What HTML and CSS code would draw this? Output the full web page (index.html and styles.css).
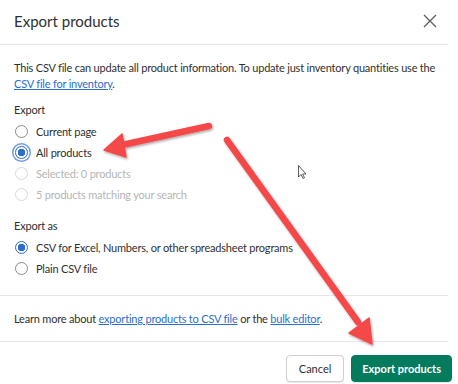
FILE: index.html
```html
<!DOCTYPE html>
<html lang="en">
<head>
    <meta charset="UTF-8">
    <meta name="viewport" content="width=device-width, initial-scale=1.0">
    <title>Export products</title>
    <link rel="stylesheet" href="styles.css">
</head>
<body>
    <div class="modal">
        <div class="modal-header">
            <h2>Export products</h2>
            <button class="close" aria-label="Close">
                <svg width="14" height="14" viewBox="0 0 14 14"><path d="M1 1 L13 13 M13 1 L1 13" stroke="#5c5c5c" stroke-width="1.3" fill="none"/></svg>
            </button>
        </div>

        <div class="modal-body">
            <p class="intro">This CSV file can update all product information. To update just inventory quantities use the <a href="#">CSV file for inventory</a>.</p>

            <div class="group">
                <div class="group-label">Export</div>
                <label class="radio"><input type="radio" name="scope"><span class="dot"></span>Current page</label>
                <label class="radio"><input type="radio" name="scope" checked><span class="dot focus"></span>All products</label>
                <label class="radio disabled"><input type="radio" name="scope" disabled><span class="dot"></span>Selected: 0 products</label>
                <label class="radio disabled"><input type="radio" name="scope" disabled><span class="dot"></span>5 products matching your search</label>
            </div>

            <div class="group">
                <div class="group-label">Export as</div>
                <label class="radio"><input type="radio" name="format" checked><span class="dot"></span>CSV for Excel, Numbers, or other spreadsheet programs</label>
                <label class="radio"><input type="radio" name="format"><span class="dot"></span>Plain CSV file</label>
            </div>
        </div>

        <div class="modal-section">
            <p>Learn more about <a href="#">exporting products to CSV file</a> or the <a href="#">bulk editor</a>.</p>
        </div>

        <div class="modal-footer">
            <button class="btn">Cancel</button>
            <button class="btn btn-primary">Export products</button>
        </div>

        <!-- annotation overlay -->
        <svg class="annotations" width="458" height="384" viewBox="0 0 458 384">
            <defs>
                <filter id="shadow" x="-20%" y="-20%" width="140%" height="140%">
                    <feDropShadow dx="1" dy="1.5" stdDeviation="1" flood-color="#000" flood-opacity="0.35"/>
                </filter>
            </defs>
            <g filter="url(#shadow)" fill="#f54949" stroke="#f54949">
                <line x1="209" y1="126" x2="122" y2="145" stroke-width="6.5" stroke-linecap="round"/>
                <polygon points="104,150 122,134 126,157" stroke-width="1.5" stroke-linejoin="round"/>
                <line x1="227" y1="140" x2="358" y2="322" stroke-width="6.5" stroke-linecap="round"/>
                <polygon points="372,344 349,333 369,318" stroke-width="1.5" stroke-linejoin="round"/>
            </g>
            <path d="M298.5 165.5 L298.5 177 L301 174.5 L303 178.5 L304.5 177.8 L302.6 174 L306 174 Z" fill="#fff" stroke="#333" stroke-width="0.8" stroke-linejoin="round"/>
        </svg>
    </div>
</body>
</html>
```

FILE: styles.css
```css
* {
    margin: 0;
    padding: 0;
    box-sizing: border-box;
}

body {
    font-family: Lato, "Open Sans", sans-serif;
    font-size: 11px;
    letter-spacing: -0.2px;
    color: #303030;
    background: white;
    width: 458px;
    height: 384px;
    overflow: hidden;
}

.modal {
    position: relative;
    width: 458px;
    height: 384px;
    background: white;
}

.modal-header {
    height: 45px;
    display: flex;
    align-items: center;
    justify-content: space-between;
    padding: 0 12px 2px 14px;
    border-bottom: 1px solid #e6e6e6;
    margin-right: 10px;
}

.modal-header h2 {
    font-size: 15px;
    font-weight: 400;
    letter-spacing: 0;
    color: #303030;
}

.close {
    border: none;
    background: none;
    width: 16px;
    height: 16px;
    display: flex;
    align-items: center;
    justify-content: center;
    margin-right: -2px;
}

a {
    color: #2c6ecb;
    text-decoration: underline;
}

.modal-body {
    padding: 15px 0 16px 14px;
    border-bottom: 1px solid #e6e6e6;
    margin-right: 10px;
}

.intro {
    line-height: 16px;
    margin-bottom: 10px;
}

.group + .group {
    margin-top: 13px;
}

.group-label {
    line-height: 16px;
    margin-bottom: 3px;
}

.radio {
    display: flex;
    align-items: center;
    height: 21px;
    gap: 8px;
    padding-left: 1px;
}

.radio input {
    display: none;
}

.dot {
    width: 13px;
    height: 13px;
    border-radius: 50%;
    border: 1.5px solid #8a8a8a;
    background: white;
    flex-shrink: 0;
}

.radio input:checked + .dot {
    border: 1px solid #2c6ecb;
    background: radial-gradient(circle, #2c6ecb 0 3.5px, white 4px);
}

.dot.focus {
    box-shadow: 0 0 0 1.5px white, 0 0 0 3px #6b9be0;
}

.radio.disabled {
    color: #b5b5b5;
}

.radio.disabled .dot {
    border-color: #d6d6d6;
}

.modal-section {
    padding: 0 14px;
    height: 46px;
    display: flex;
    align-items: center;
    border-bottom: 1px solid #e6e6e6;
    margin-right: 10px;
}

.modal-footer {
    display: flex;
    justify-content: flex-end;
    gap: 7px;
    padding: 13px 6px 0 0;
}

.btn {
    font-family: Lato, "Open Sans", sans-serif;
    font-size: 11px;
    height: 27px;
    padding: 0 12px;
    border-radius: 4px;
    border: 1px solid #cfcfcf;
    background: white;
    color: #303030;
    box-shadow: 0 1px 0 rgba(0,0,0,0.08);
}

.btn-primary {
    padding: 0 10px;
    background: #047b5d;
    border-color: #047b5d;
    color: white;
    font-weight: 700;
}

.annotations {
    position: absolute;
    left: 0;
    top: 0;
    pointer-events: none;
}
```
